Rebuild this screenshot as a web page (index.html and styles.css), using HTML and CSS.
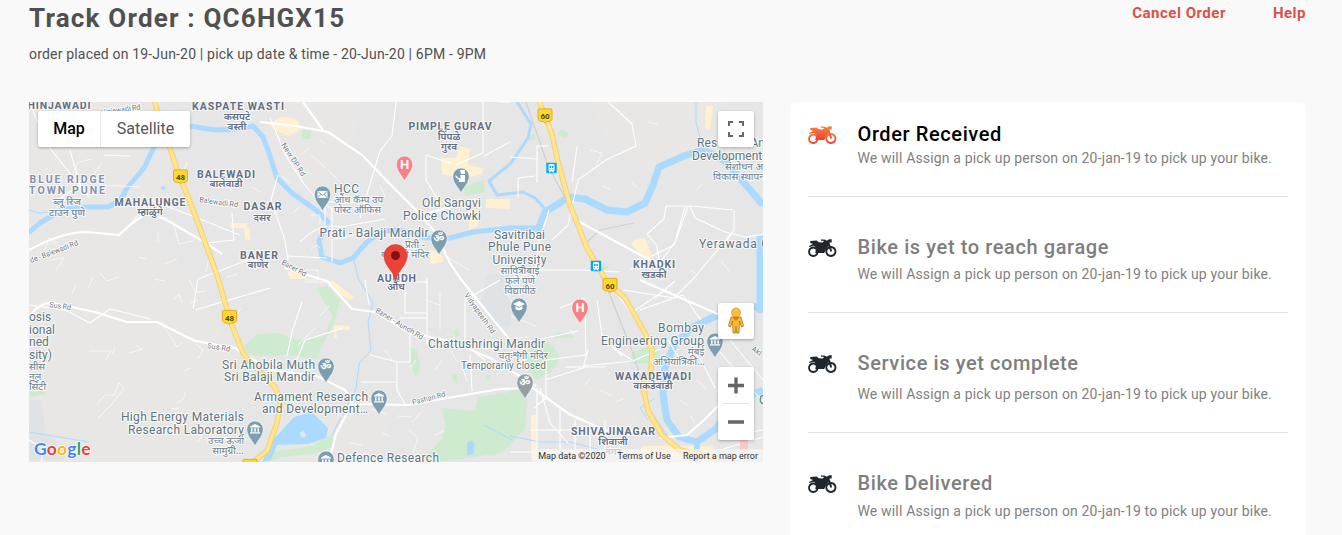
FILE: index.html
```html
<!DOCTYPE html>
<html lang="en">
<head>
<meta charset="utf-8">
<title>Track Order</title>
<link rel="stylesheet" href="styles.css">
</head>
<body>
<svg class="defs" width="0" height="0" aria-hidden="true">
  <defs>
    <linearGradient id="flame" x1="0" y1="0" x2="0" y2="1"><stop offset="0" stop-color="#f58634"/><stop offset="1" stop-color="#ec3f45"/></linearGradient>
    <g id="bike">
      <path fill-rule="evenodd" d="M5.3 7.6a5.200 5.200 0 1 0 .01 0zM5.3 9.500a3.300 3.300 0 1 1-.01 0zM22.9 7a5.500 5.500 0 1 0 .01 0zM22.9 8.900a3.600 3.600 0 1 1-.01 0z"/>
      <path d="M2.2 2.1 8.7 1.6 10.8 3.3 14.2 3.5 16 2.6 15.3 1.8H12.9V.4h3.6l1.8 1.1 1.5-.2L21 .2h2.7v3.4h-2.3l2.7 8.3-1.5 1.2-2.4-6-3.1 5.2-.8 1.7H7.2L8.3 9 5.9 6.7 1.6 8 1 7l4-2.1-2.6-1z"/>
    </g>
    <g id="pin"><path d="M0 17.2C-1.8 12-8.2 7.4-8.2.2a8.2 8.2 0 1 1 16.4 0C8.2 7.4 1.8 12 0 17.2z" stroke="#fff" stroke-width=".6"/></g>
    <g id="museum" fill="#fff"><path d="M0-5 5-2.4v1H-5v-1zM-4-.7h1.6v3.4H-4zM-.8-.7H.8v3.4H-.8zM2.4-.7H4v3.4H2.4zM-5 3.2H5v1.3H-5z"/></g>
    <g id="train"><rect x="-5.2" y="-5.2" width="10.4" height="10.4" rx="1" fill="#03a9f4"/><path d="M-3-3.5Q0-4.7 3-3.5V2.5L2 3.5l1 1H1.6l-.9-.9H-.7l-.9.9H-3l1-1-1-1z" fill="#fff"/><path d="M-2-2H-.4V0H-2zM.4-2H2V0H.4zM-2 1.2h1v1h-1zM1 1.2h1v1H1z" fill="#03a9f4"/></g>
    <path id="shield" d="M-6-6.600h12q1 0 1 1V4L4.400 6H2L0 7.300-2 6h-2.400L-7 4v-9.600q0-1 1-1z" fill="#fdd835" stroke="#e5ad16"/>
  </defs>
</svg>
<main class="page">
  <header class="top">
    <div>
      <h1 class="order-title">Track Order : QC6HGX15</h1>
      <p class="order-meta">order placed on 19-Jun-20 | pick up date &amp; time - 20-Jun-20 | 6PM - 9PM</p>
    </div>
    <nav class="links"><a>Cancel Order</a><a>Help</a></nav>
  </header>
  <div class="columns">
    <section class="map">
      <svg class="canvas" viewBox="29 102 734 360" width="734" height="360">
        <rect x="29" y="102" width="734" height="360" fill="#e6e6e6"/>
        <g fill="#e9e7e4">
          <path d="M29 102h95l50 50-18 60-50 24-77 24zM29 265l100-40 75 70 28 60 0 107H29zM280 102h80l-6 40-40 60-60-50zM590 102h140v45l-70 30-50-30zM270 420l70-20 50 20-10 42H290zM570 390l50-10 20 50-40 20z" opacity=".75"/>
        </g>
        <path d="M29 400l13 0 3 32 12 10 14 5-8 13H29zM487 275h24v50l-17 4-14-25z" fill="#dfe3e6"/>
        <g fill="#ceebd0">
          <path d="M316 288l12-2 12 14-5 21-19 38-26-4-34 1-8-3-4-7 14-12 20-1 17 7 28-3 10-20z"/>
          <path d="M441 408l34 3 3-14 32-5 18-13-3 50-23 24-64 9-16-3 20-20 4-14z"/>
          <path d="M510 390l16 10-3 15-13 4zM536 338q22 5 23 22-5 12-22 20l-14-15zM464 187l18-7 2-1 1 13-20 4zM302 130h9v9h-9zM561 129l8 4-3 5-8-4zM530 136l5-2v6h-7zM632 352l24-8 6 18-32 2zM270 452l42-6 20-12 2 13-22 7-30 3-14 5zM29 391l14-2 3 5-17 3zM602 264l6 3-4 5-4-3zM557 332l18 4-1 2-20 0zM409 347l8 3 3 16-4 11-7-16zM454 332l3-4 2 6-3 4zM452 374l5 0v9l-5-4zM485 375h6v5h-6z"/>
        </g>
        <g class="buildings" fill="#fff0cf">
          <path d="M282 117l14 2 6 10-13 7-14-6-6-6zM441 158l15 0 4-12 10 3-2 16 16 3-3 6-17 5-22-5zM486 199l24 0v10l-24-1zM469 210l8 0 1 16-9 4zM635 240l10-2 8 20-9-1-13-13zM706 106h7l-3 24-5-1zM230 223h17v5h-17zM244 228l5-1 2 14-6-2zM336 330h14v-4l-16-1v13h3zM430 249l12 6 1 7-13 2zM641 446h72v16h-72zM531 415h5v46h-5zM287 271l22 3-4 5-15 0zM332 280l22 17-4 3-22-14z"/>
        </g>
        <g class="river">
          <path class="w6" d="M28 233L40 223 63 209 87 207 108 207 120 201 127 188 144 168 154 147 168 133 190 126 215 130 238 129 253 126 263 137 268 150 277 178 292 193 317 211 328 222 319 241 322 257 340 263 353 258 367 242 383 231 400 230 427 238 450 238 473 232 510 228 537 228"/>
          <path class="w7" d="M537 232L545 212 569 197 585 199 607 210 627 212 645 203 653 185 659 167 684 156 703 150 724 160 745 184 763 205"/>
          <path class="w5" d="M517 102L531 124 528 138 511 163 489 181 497 195 523 192 535 198 546 210"/>
          <path class="w8" d="M760 235L760 310 763 306 730 309 693 327 674 345 665 368 663 395 667 420 679 437 697 442 717 428 730 405 763 390"/>
        </g>
        <g fill="#aadaff"><path d="M294 417l18-5 16 16-2 10-18 6-31 1-6 15-9 2 10-21z"/><path d="M467 443l5-3 3 4-2 10-6 2zM694 445h6v17h-6z"/><circle cx="163" cy="188" r="2"/><path d="M299 433l5-2 2 5-3 2z" fill="#dfe9df"/></g>
        <path class="stream" d="M354 260L358 278 373 303 368 322 371 350 359 364 356 389 332 435M29 210l9 3 12-1M696 102v20l5 20M512 440l-28-15M29 432l60 10M510 436l30 6 30 0 30 8M648 420l-8-12 15-10"/>
        <g class="rail"><path d="M526 102L548 166 569 205 589 253 608 290 634 356 650 410 680 455M587 242l13-12 34-7"/></g>
        <g class="road">
          <path class="major" d="M260 122L296 126 328 132 362 155 386 180 421 215 435 232 450 263 460 278 495 322 510 340M29 317q10-15 24-14L95 312 127 322 157 322 195 341 235 348 270 370 317 376 345 390 352 404 408 405 459 396 500 389 533 388 569 414 600 428M29 250q33-18 58-18L119 235 130 225 145 214 163 218 206 243 222 254M285 268L327 281 352 309 375 312 410 333 450 341 490 358 536 386M303 102l20 28M421 215l55-15M576 220l70 38 22 10M352 404l-16 30-7 28M640 280l80 35M660 438l27-3 17-15 17-17 15-6"/>
          <path d="M510 345l50-10 18-4M537 388l0 74M585 305l1 50-40 5 0 38-12 10M29 102l20 45 40 50M60 102l-8 25M104 155l26 1M130 225l20-25 40 15 50 20M206 243l28-3-2-27M270 118l16 38 18 28 11 13 17 12 0 53M278 175l-7 25 14 40 3 20M288 256l39 2M300 242q20-20 40-15l45-8M325 230v-28l35 0M360 218l10-34 10-33 12-15 4-34M426 155v25l15 25M426 155l30 10 27-12 0-51M484 156l26-14M500 102l10 0M552 240l16-15 10-45 28-20 30-14-4-22-30-28M577 147l-5 35M537 183v-37h12M510 157l28 2M518 198v-20l17-2M549 210l-10 32-4 35M660 266l-3-20-10-12 17-15 2-13 24 0 5 12 30 14 20 5 30-4M690 206l44 4 0 20-12 18M644 260l30-15 14-38M685 207l-10 35-16 22-29 5M734 230l-40 48-20 20-50-8M500 270h80l40 2M597 300l5 36 20 20M609 283l22 30 30-20 14-12M640 310l43-15 18 25M680 360l-12-20M500 280l-35 20 0 45 20 15M427 282h-10M365 280l4 25M405 287v26h22v32M427 278v64M400 318h27M370 355l27 7 0 28 9 16M361 382h35M470 355l2 36M398 362h12l0-35M302 302l-10 30-5 24M288 380l17-40 38-12M29 305l36 5 25 13 20-14 41 10M193 309l5-30 52-20 20 7M195 310l75-22M70 150l10 35-22 15M530 430h120M560 410l0 52M575 420v42M590 430v32M605 420v42M510 452h140M545 380l38-12 5-18M583 366l50-5 27-12M560 308l25-10M617 350l15 10M605 367l-40 0M540 388l10 35 18 20M29 440l13 8v14M700 358l15 30M720 352l43 50M730 340l33 40M734 435l29-5M720 450l43-13"/>
          <path class="fine" d="M45 250l4-12 10 8M70 182l8-20 14-3M50 260l14-2-8 13M100 273l7 8 12-4M143 194v11l12-7M173 222l6 22 14-3M165 264l12-5M210 252l-4 20M189 280l7 12 10-1M89 351h22l-6 9M97 404l8-9 9 0 5-12 5 5-12 16-14 14M112 354l3-6M129 353l13-4-6-4M161 322l16 25 5-4M173 300l6-6 3 8M190 303l8-3M198 359l5-9-7-6M176 403q10-3 9-11M184 371l7-3M171 409l8-1M198 442l8-14-7-1M306 270h12v10h-12zM304 282l28 0M329 306l-9 10M298 345l17-17M311 155l15 13M328 170l12 12M300 155l10-7M320 140l5 4M282 176l8 7M310 215h10v10M311 249l6-4 3 3M333 240l22-5M380 185l5 12M350 202l9-4M425 300l15 5M440 292v38M444 255l25 15M450 350l7 11M435 370l7-10M462 365l5 17M410 368l6-8M409 430l9 8-5 14M434 435l10-4M371 409l15 5M398 416l14 1M330 410l13 7M350 443l12 2M382 433l7 3M421 412l-9 11M385 350l8 12M495 365l8 2M497 375l7-7M515 280l20-10M506 290l7 15M511 316l25 10M516 338l13-1M648 122l10 2M590 150l12 3-5 10M632 183l5 4M602 186l8 3M702 183l-6 8M721 261l8 10M690 270l5 3M655 300l7-8M570 330l5 5M600 390l12 6M616 402l7-3M585 385l5-6M680 400l8 6M690 415l5 8M707 390l-10-10M44 116l10 5-3-11M77 140l10-2M95 172l6-8M102 185l38 2M133 198l4 7M187 162l-4 12M88 288l5-11M139 257l7 2M158 242v-11M72 294l4-9M154 279l11 2M226 277l12-3M260 192l-8-5M257 292l8-2M241 308l-6 10M300 206l-7 7M229 185l3 7"/>
        </g>
        <g class="hwy">
          <path d="M154 101L166 136 178 172 194 212 217 275 231 323 243 353 252 364 274 386 281 399 277 423 267 451 248 466M539 101L552 134 558 162 570 205 587 248 607 282 625 298 645 333 652 350 651 370 644 391 648 411 662 435 680 450 720 459"/>
          <path class="core" d="M154 101L166 136 178 172 194 212 217 275 231 323 243 353 252 364 274 386 281 399 277 423 267 451 248 466M539 101L552 134 558 162 570 205 587 248 607 282 625 298 645 333 652 350 651 370 644 391 648 411 662 435 680 450 720 459"/>
        </g>
        <g class="shields">
          <use href="#shield" x="180.500" y="176.500"/><text x="180.500" y="180">48</text>
          <use href="#shield" x="229.500" y="317"/><text x="229.500" y="321">48</text>
          <use href="#shield" x="545" y="115.500"/><text x="545" y="119">60</text>
          <use href="#shield" x="610" y="285"/><text x="610" y="288.500">60</text>
          <use href="#shield" x="250" y="466"/>
        </g>
        <use href="#train" x="551.500" y="168"/><use href="#train" x="596" y="266"/>

        <g class="label road-name">
          <text x="101" y="115" transform="rotate(-8 101 115)" textLength="40">Hinjewadi Rd</text>
          <text x="281" y="145" transform="rotate(57 281 145)" textLength="38">New DP Rd</text>
          <text x="199" y="202" transform="rotate(8 199 202)" textLength="39">Balewadi Rd</text>
          <text x="31" y="263" transform="rotate(-21 31 263)" textLength="51">de - Balewadi Rd</text>
          <text x="281" y="264" transform="rotate(28 281 264)" textLength="27">Baner Rd</text>
          <text x="49" y="307" transform="rotate(8 49 307)" textLength="22">Sus Rd</text>
          <text x="207" y="348" transform="rotate(9 207 348)" textLength="23">Sus Rd</text>
          <text x="375" y="312" transform="rotate(31 375 312)" textLength="54">Baner - Aundh Rd</text>
          <text x="464" y="295" transform="rotate(55 464 295)" textLength="48">Vidyapeeth Rd</text>
          <text x="413" y="405" transform="rotate(-15 413 405)" textLength="34">Pashan Rd</text>
          <text x="751" y="350" transform="rotate(35 751 350)">Akl</text>
        </g>
        <g class="label area">
          <text x="59" y="109" textLength="63">HINJAWADI</text><text x="238" y="110" textLength="92">KASPATE WASTI</text>
          <text x="450" y="130" textLength="83">PIMPLE GURAV</text><text x="226" y="178" textLength="58">BALEWADI</text>
          <text x="150" y="206" textLength="71">MAHALUNGE</text><text x="262.500" y="210" textLength="38">DASAR</text>
          <text x="259" y="259" textLength="38">BANER</text><text x="396.500" y="282" textLength="39">AUNDH</text>
          <text x="654" y="268" textLength="42">KHADKI</text><text x="653" y="380" textLength="76">WAKADEWADI</text>
          <text x="613" y="435" textLength="84">SHIVAJINAGAR</text>
          <g class="light"><text x="67" y="183" textLength="75">BLUE RIDGE</text><text x="67" y="194" textLength="76">TOWN PUNE</text></g>
        </g>
        <g class="label hindi strong">
          <text x="237" y="120">कसपटे</text><text x="237" y="130">वस्ती</text><text x="449" y="140">पिंपळे</text><text x="449" y="150">गुरव</text>
          <text x="226" y="187">बालेवाडी</text><text x="150" y="215">म्हाळुंगे</text><text x="262" y="221">दसर</text><text x="258" y="268">बाणेर</text>
          <text x="396" y="290">औंध</text><text x="654" y="278">खडकी</text><text x="653" y="389">वाकडेवाडी</text><text x="613" y="445">शिवाजी</text><text x="613" y="455">नगर</text>
          <text x="67" y="205" class="light">ब्लू रिज</text><text x="67" y="216" class="light">टाउन पुणे</text>
        </g>
        <g class="label poi">
          <text x="334" y="193" textLength="25">HCC</text>
          <g class="mid"><text x="451.500" y="207" textLength="59">Old Sangvi</text><text x="442" y="220" textLength="78">Police Chowki</text><text x="374" y="237" textLength="109">Prati - Balaji Mandir</text>
          <text x="519.500" y="239" textLength="51">Savitribai</text><text x="519.500" y="251" textLength="63">Phule Pune</text><text x="519.500" y="264" textLength="54">University</text></g>
          <g class="end"><text x="315" y="369" textLength="93">Sri Ahobila Muth</text><text x="315" y="381" textLength="91">Sri Balaji Mandir</text><text x="368" y="401" textLength="114">Armament Research</text><text x="368" y="413" textLength="106">and Development…</text>
          <text x="244" y="421" textLength="123">High Energy Materials</text><text x="244" y="434" textLength="116">Research Laboratory</text><text x="545" y="348" textLength="117">Chattushringi Mandir</text>
          <text x="704" y="332" textLength="46">Bombay</text><text x="704" y="345" textLength="103">Engineering Group</text><text class="small" x="546" y="369" textLength="85">Temporarily closed</text></g>
          <text x="337" y="462" textLength="102">Defence Research</text>
          <text x="697" y="147" textLength="68">Research An</text><text x="692" y="160">Development</text><text x="699" y="248" textLength="70">Yerawada C</text>
          <text x="29" y="321">osis</text><text x="29" y="334">ional</text><text x="29" y="346">ned</text><text x="29" y="359">sity)</text>
        </g>
        <g class="label hindi">
          <g class="start"><text x="334" y="203">औंध कॅम्प उप</text><text x="334" y="213">पोस्ट ऑफिस</text><text x="29" y="370">सीस</text><text x="29" y="380">नल</text><text x="29" y="390">र्सिटी</text><text x="725" y="170">संशोधन आ</text><text x="713" y="180">विकास स्थापन</text></g>
          <text x="415" y="248">प्रती -</text><text x="405" y="258">बालाजी मंदिर</text><text x="520" y="274">सावित्रीबाई</text><text x="520" y="284">फुले पुणे</text><text x="520" y="294">विद्यापीठ</text>
          <text x="226" y="444">उच्च ऊर्जा</text><text x="228" y="454">सामुग्री...</text><text x="523" y="359">चतुःशृंगी मंदिर</text><text x="696" y="355">मंबई</text><text x="679" y="365">अभियांत्रिकी...</text>
        </g>

        <g fill="#7b9eb0">
          <use href="#pin" x="322.500" y="194"/><use href="#pin" x="461" y="176"/><use href="#pin" x="439" y="238"/><use href="#pin" x="519" y="306"/><use href="#pin" x="326" y="366"/><use href="#pin" x="379" y="398"/><use href="#pin" x="255" y="429"/><use href="#pin" x="326" y="459"/><use href="#pin" x="715" y="341"/>
        </g>
        <use href="#pin" x="525" y="382" fill="#949ea4"/>
        <g fill="#f88087"><use href="#pin" x="404.500" y="164"/><use href="#pin" x="580" y="307"/></g>
        <g class="hospital"><text x="404.500" y="169">H</text><text x="580" y="312">H</text></g>
        <g class="om"><text x="439" y="242">ॐ</text><text x="326" y="370">ॐ</text><text x="525" y="386">ॐ</text></g>
        <use href="#museum" x="379" y="398"/><use href="#museum" x="255" y="429"/><use href="#museum" x="326" y="460"/><use href="#museum" x="715" y="341"/>
        <path d="M317.500 191h10v7h-10z" fill="#fff"/><path d="M318 191.500l4.500 4 4.500-4M318 197.500l3-3.500M327 197.500l-3-3.500" fill="none" stroke="#7b9eb0"/>
        <path d="M460 170h5v4h-4zM455.500 175l3 3h2v-3h4.500v7h-6v-2l-3.500-3zM519 301l6 3-6 3-6-3zM515.500 306l3.500 2 3.500-2v3q-3.500 2.500-7 0z" fill="#fff"/>
        <path d="M395.500 281C393.500 270 384 266 384 256a11.500 11.500 0 1 1 23 0c0 10-9.500 14-11.500 25z" fill="#ea4335" stroke="#d23c30" stroke-width=".6"/><circle cx="395.500" cy="255.500" r="4.500" fill="#811411"/>
        <rect x="740" y="440" width="8" height="10" fill="#f8c9c9"/>
        <text x="759" y="404" class="green">G</text>
      </svg>
      <div class="map-type"><span class="active">Map</span><span>Satellite</span></div>
      <div class="ctl full"><svg width="18" height="18" viewBox="0 0 18 18"><path d="M2 6V2h4M12 2h4v4M16 12v4h-4M6 16H2v-4" fill="none" stroke="#666" stroke-width="2"/></svg></div>
      <div class="ctl person"><svg width="18" height="28" viewBox="0 0 18 28"><path d="M4 10h10l2.500 9-2 1-2-6-.5 12H9.500L9 19l-.5 7H6l-.5-12-2 6-2-1z" fill="#fbb92d" stroke="#a86a16" stroke-width=".7"/><circle cx="9" cy="5.500" r="4.500" fill="#fcbf31" stroke="#c68315" stroke-width=".6"/><path d="M5 10h8l-4 4z" fill="#df7626"/></svg></div>
      <div class="ctl zoom"><svg width="36" height="73" viewBox="0 0 36 73"><path d="M10 18.500h16M18 10.500v16M10 55h16" stroke="#666" stroke-width="3.400"/><path d="M4 36.500h28" stroke="#e6e6e6"/></svg></div>
      <div class="google"><b class="b">G</b><b class="r">o</b><b class="y">o</b><b class="b">g</b><b class="g">l</b><b class="r">e</b></div>
      <div class="legal"><span>Map data ©2020</span><span>Terms of Use</span><span>Report a map error</span></div>
    </section>
    <section class="panel">
      <article class="step first"><svg class="bike hot" viewBox="0 0 29 19"><use href="#bike"/></svg><div><h2>Order Received</h2><p>We will Assign a pick up person on 20-jan-19 to pick up your bike.</p></div></article>
      <article class="step second"><svg class="bike" viewBox="0 0 29 19"><use href="#bike"/></svg><div><h2>Bike is yet to reach garage</h2><p>We will Assign a pick up person on 20-jan-19 to pick up your bike.</p></div></article>
      <article class="step third"><svg class="bike" viewBox="0 0 29 19"><use href="#bike"/></svg><div><h2>Service is yet complete</h2><p>We will Assign a pick up person on 20-jan-19 to pick up your bike.</p></div></article>
      <article class="step last"><svg class="bike" viewBox="0 0 29 19"><use href="#bike"/></svg><div><h2>Bike Delivered</h2><p>We will Assign a pick up person on 20-jan-19 to pick up your bike.</p></div></article>
    </section>
  </div>
</main>
</body>
</html>
```
FILE: styles.css
```css
* { box-sizing: border-box; }
body { margin: 0; background: #f9f9f9; font-family: Roboto, "Noto Sans", sans-serif; color: #505050; }
h1, h2, p { margin: 0; }
.defs { display: block; height: 0; }
.page { padding: 0 36px 0 29px; height: 535px; overflow: hidden; }
.top { display: flex; justify-content: space-between; height: 102px; }
.order-title { font-size: 26px; line-height: 36px; font-weight: 700; letter-spacing: 1.190px; white-space: nowrap; }
.order-meta { font-size: 14px; line-height: 20px; margin-top: 8px; letter-spacing: .180px; }
.links { display: flex; gap: 47px; font-size: 15px; line-height: 20px; padding-top: 3px; font-weight: 700; letter-spacing: .5px; color: #dd5145; }
.columns { display: flex; gap: 27px; align-items: flex-start; }
.map { position: relative; width: 734px; height: 360px; overflow: hidden; flex: none; }
.canvas { display: block; }
.panel { width: 516px; height: 433px; background: #fff; border-radius: 5px 5px 0 0; padding: 0 18px; }
.step { display: flex; gap: 20.500px; border-bottom: 1px solid #e2e2e2; }
.step h2 { font-size: 20px; line-height: 26px; font-weight: 500; letter-spacing: .6px; color: #7e7e7e; }
.step p { font-size: 14px; line-height: 20px; letter-spacing: .165px; color: #818181; white-space: nowrap; }
.first { height: 95px; padding-top: 19px; }
.step.first h2 { color: #000; }
.first p { margin-top: 1px; }
.second { height: 116px; padding-top: 37px; }
.second p { margin-top: 4px; }
.third { height: 120px; padding-top: 37px; }
.third p { margin-top: 8px; }
.last { height: 102px; padding-top: 37px; border: 0; }
.last p { margin-top: 5px; }
.bike { width: 29px; height: 19px; margin-top: 5px; flex: none; fill: #20262b; }
.hot { fill: url(#flame); }

.river { fill: none; stroke: #aadaff; stroke-linejoin: round; }
.w5 { stroke-width: 3; } .w6 { stroke-width: 5; } .w7 { stroke-width: 7; } .w8 { stroke-width: 7; }
.stream { fill: none; stroke: #aadaff; stroke-width: 1; }
.rail { fill: none; stroke: #d0d0d0; stroke-width: 1.200; }
.road { fill: none; stroke: #fff; stroke-width: 1.100; stroke-linejoin: round; }
.road .major { stroke-width: 2.200; }
.road .fine { stroke-width: .8; opacity: .85; }
.hwy { fill: none; stroke: #f8d06a; stroke-width: 5.500; stroke-linejoin: round; }
.hwy .core { stroke: #ffe594; stroke-width: 3.500; }
.shields { font: 700 8px Roboto, sans-serif; text-anchor: middle; fill: #574611; }
.label { paint-order: stroke; stroke: rgba(255,255,255,.8); stroke-width: 2px; stroke-linejoin: round; }
.area { font: 700 10.500px Roboto, sans-serif; text-anchor: middle; fill: #626f82; }
.light { fill: #8291aa; }
.hindi { font: 10px "Noto Sans", "Noto Sans Devanagari", sans-serif; text-anchor: middle; fill: #6c8290; }
.strong { font-weight: 600; fill: #626f82; }
.strong .light { fill: #8291aa; }
.poi { font: 12px Roboto, sans-serif; fill: #5d7580; }
.mid { text-anchor: middle; }
.end { text-anchor: end; }
.start { text-anchor: start; }
.small { font-size: 10px; }
.road-name { font: 7.500px Roboto, sans-serif; fill: #6f7b88; }
.hospital { font: 700 13px Roboto, sans-serif; text-anchor: middle; fill: #fff; }
.om { font: 700 11px "Noto Sans", sans-serif; text-anchor: middle; fill: #fff; }
.green { font: 12px Roboto, sans-serif; fill: #3d935b; }

.map-type { position: absolute; left: 9px; top: 9px; height: 36px; width: 152px; display: flex; background: #fff; border-radius: 2px; box-shadow: 0 1px 3px rgba(0,0,0,.3); font-size: 16px; line-height: 36px; color: #565656; }
.map-type span { width: 89px; text-align: center; }
.map-type .active { width: 63px; border-right: 1px solid #e6e6e6; color: #000; font-weight: 500; }
.ctl { position: absolute; right: 9px; width: 36px; height: 36px; background: #fff; border-radius: 2px; box-shadow: 0 1px 3px rgba(0,0,0,.3); display: flex; align-items: center; justify-content: center; }
.full { top: 9px; } .person { top: 201px; } .zoom { top: 265px; height: 73px; }
.google { position: absolute; left: 5px; top: 337px; font-family: Lato, sans-serif; font-size: 17.500px; line-height: 20px; -webkit-text-stroke: 1.500px #fff; paint-order: stroke; letter-spacing: .2px; }
.b { color: #4285f4; } .r { color: #ea4335; } .y { color: #fbbc05; } .g { color: #34a853; }
.legal { position: absolute; right: 0; bottom: 0; height: 13px; padding: 0 5px; display: flex; gap: 12px; background: rgba(245,245,245,.7); font-size: 9px; line-height: 14px; color: #333; white-space: nowrap; }
```
